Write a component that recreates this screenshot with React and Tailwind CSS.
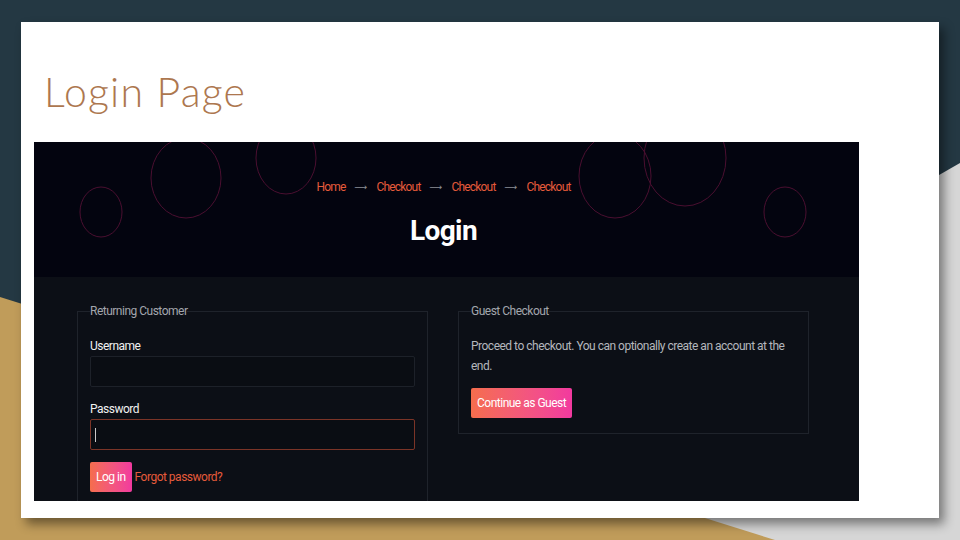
import React from "react";

const circles = [
    { cx: 67, cy: 70, rx: 21, ry: 25 },
    { cx: 152, cy: 36, rx: 35, ry: 40 },
    { cx: 252, cy: 16, rx: 30, ry: 36 },
    { cx: 581, cy: 34, rx: 36, ry: 42 },
    { cx: 651, cy: 16, rx: 41, ry: 48 },
    { cx: 751, cy: 70, rx: 21, ry: 25 },
];

function SlideBackground() {
    return (
        <svg className="absolute inset-0" width="960" height="540" viewBox="0 0 960 540">
            <rect width="960" height="540" fill="#243843" />
            <polygon points="960,163 0,713 960,540" fill="#d6d6d6" />
            <polygon points="0,297 960,598 0,540" fill="#c09c5a" />
        </svg>
    );
}

function Breadcrumb() {
    const items = ["Home", "Checkout", "Checkout", "Checkout"];
    return (
        <div className="flex items-center gap-[9px] text-[12px] leading-[16px] tracking-[-0.8px]">
            {items.map((item, i) => (
                <React.Fragment key={i}>
                    {i > 0 && <span className="font-['DejaVu_Sans',sans-serif] text-[9px] tracking-normal text-[#8b8e96]">⟶</span>}
                    <span className="text-[#e55b3b]">{item}</span>
                </React.Fragment>
            ))}
        </div>
    );
}

function GradientButton({ children }) {
    return (
        <button className="h-[30px] px-[6px] rounded-[2px] bg-linear-to-r from-[#f56d4c] to-[#f2399f] text-white text-[12px] leading-[16px]">
            {children}
        </button>
    );
}

function Field({ label, focused }) {
    return (
        <div className="flex flex-col">
            <label className="text-[12px] leading-[16px] text-[#f1f1f1] mb-[2px]">{label}</label>
            <div
                className={`relative h-[31px] rounded-[2px] border bg-[#0a0d13] ${focused ? "border-[#7b3427]" : "border-[#1d2129]"}`}
            >
                {focused && <span className="absolute left-[4px] top-[8px] w-px h-[14px] bg-[#c9c9c9]" />}
            </div>
        </div>
    );
}

function Screenshot() {
    return (
        <div className="w-[825px] h-[359px] overflow-hidden bg-[#0c0f16] font-['Roboto',sans-serif] tracking-[-0.5px]">
            {/* hero */}
            <div className="relative h-[135px] bg-[#03040f] flex flex-col items-center pt-[37px] pr-[6px]">
                <svg className="absolute inset-0" width="825" height="135">
                    {circles.map((c, i) => (
                        <ellipse key={i} cx={c.cx} cy={c.cy} rx={c.rx} ry={c.ry} fill="none" stroke="#4a0f30" strokeWidth="1" />
                    ))}
                </svg>
                <div className="relative">
                    <Breadcrumb />
                </div>
                <h1 className="relative mt-[19px] text-[28px] leading-[34px] font-bold tracking-[-0.6px] text-white">Login</h1>
            </div>

            {/* body */}
            <div className="flex gap-[30px] pl-[43px] pt-[26px]">
                <fieldset className="w-[351px] border border-[#1f232b] px-[12px] pb-[20px]">
                    <legend className="text-[12px] leading-[16px] text-[#a3a6ad]">Returning Customer</legend>
                    <div className="flex flex-col gap-[14px] mt-[19px]">
                        <Field label="Username" />
                        <Field label="Password" focused />
                    </div>
                    <div className="flex items-center gap-[3px] mt-[12px]">
                        <GradientButton>Log in</GradientButton>
                        <span className="text-[12px] text-[#e55b3b]">Forgot password?</span>
                    </div>
                </fieldset>

                <fieldset className="w-[351px] self-start border border-[#1f232b] px-[12px] pb-[15px]">
                    <legend className="text-[12px] leading-[16px] text-[#a3a6ad]">Guest Checkout</legend>
                    <p className="mt-[17px] text-[12px] leading-[20px] text-[#b4b7bd]">
                        Proceed to checkout. You can optionally create an account at the end.
                    </p>
                    <div className="mt-[12px]">
                        <GradientButton>Continue as Guest</GradientButton>
                    </div>
                </fieldset>
            </div>
        </div>
    );
}

export default function App() {
    return (
        <div className="relative w-[960px] h-[540px] overflow-hidden">
            <SlideBackground />
            <div className="relative pt-[22px] pl-[21px]">
                <div className="w-[918px] h-[496px] bg-white shadow-[5px_6px_10px_rgba(0,0,0,0.45)] pl-[13px] pt-[44px]">
                    <h2 className="pl-[10px] h-[76px] font-['Lato',sans-serif] font-light text-[41px] leading-[52px] tracking-[1.2px] text-[#ad774f]">
                        Login Page
                    </h2>
                    <Screenshot />
                </div>
            </div>
        </div>
    );
}
